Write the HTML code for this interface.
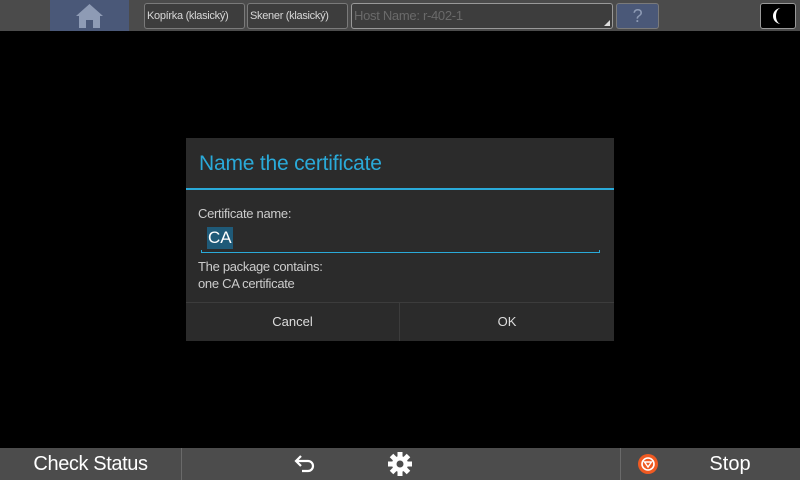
<!DOCTYPE html>
<html><head><meta charset="utf-8"><style>
*{margin:0;padding:0;box-sizing:border-box}
body{width:800px;height:480px;background:#000;position:relative;overflow:hidden;font-family:"Liberation Sans",sans-serif;}
.top{position:absolute;left:0;top:0;width:800px;height:31px;background:#4b4b4b}
.home{position:absolute;left:50px;top:0;width:79px;height:31px;background:#4a5878}
.tb{position:absolute;top:3px;height:26px;border:1px solid #7a7a7a;border-radius:3px;background:#3d3d3d;color:#d8d8d8;font-size:11px;line-height:24px;padding-left:2px;white-space:nowrap;overflow:hidden;letter-spacing:-0.3px}
.bot{position:absolute;left:0;top:448px;width:800px;height:32px;background:#4c4c4c;color:#fff}
.dlg{position:absolute;left:186px;top:138px;width:428px;height:203px;background:#2b2b2b}
</style></head><body>
<div class="top">
<div class="home"><svg width="79" height="31"><path d="M39.5 4 L26 16 L29 16 L29 28 L36 28 L36 20 L43 20 L43 28 L50 28 L50 16 L53 16 Z" fill="#8e9bb5"/><rect x="36" y="20" width="7" height="8" fill="#4a5878"/></svg></div>
<div class="tb" style="left:144px;width:101px">Kopírka (klasický)</div>
<div class="tb" style="left:247px;width:101px">Skener (klasický)</div>
<div class="tb" style="left:351px;width:262px;color:#6a6a6a;font-size:13px;border-color:#999">Host Name: r-402-1<svg style="position:absolute;right:2px;bottom:2px" width="6" height="6"><path d="M6 0 L6 6 L0 6Z" fill="#ddd"/></svg></div>
<div class="tb" style="left:616px;width:43px;background:#4a5878;color:#8e9bb5;font-size:18px;text-align:center;padding:0">?</div>
<div style="position:absolute;left:760px;top:3px;width:36px;height:26px;background:#000;border:1px solid #999;border-radius:3px"><svg width="34" height="24"><path d="M20 4 A8 8 0 0 0 20 20 A5 8 0 0 1 20 4Z" fill="#fff"/></svg></div>
</div>
<div class="dlg">
<div style="position:absolute;left:13px;top:14px;color:#2aaad9;font-size:21px;letter-spacing:-0.2px">Name the certificate</div>
<div style="position:absolute;left:0;top:50px;width:428px;height:2px;background:#2aaad9"></div>
<div style="position:absolute;left:12px;top:68px;color:#ccc;font-size:13px;letter-spacing:-0.3px">Certificate name:</div>
<div style="position:absolute;left:21px;top:89px;background:#1f5a78;color:#fff;font-size:17px;padding:0 1px;line-height:22px">CA</div>
<div style="position:absolute;left:15px;top:112px;width:399px;height:3px;border:1px solid #2aaad9;border-top:none"></div>
<div style="position:absolute;left:12px;top:120px;color:#ccc;font-size:13px;line-height:17px;letter-spacing:-0.3px">The package contains:<br>one CA certificate</div>
<div style="position:absolute;left:0;top:164px;width:428px;height:1px;background:#3c3c3c"></div>
<div style="position:absolute;left:213px;top:164px;width:1px;height:39px;background:#3c3c3c"></div>
<div style="position:absolute;left:0;top:176px;width:213px;text-align:center;color:#ddd;font-size:13px">Cancel</div>
<div style="position:absolute;left:214px;top:176px;width:214px;text-align:center;color:#ddd;font-size:13px">OK</div>
</div>
<div class="bot">
<div style="position:absolute;left:0;top:5px;width:181px;text-align:center;font-size:20px;letter-spacing:-0.4px">Check Status</div>
<div style="position:absolute;left:181px;top:0;width:1px;height:32px;background:#6a6a6a"></div>
<div style="position:absolute;left:620px;top:0;width:1px;height:32px;background:#6a6a6a"></div>
<svg style="position:absolute;left:293px;top:5px" width="26" height="22"><path d="M8 3 L3 8 L8 13 M3 8 H15 A5 5 0 0 1 15 18 H9" stroke="#fff" stroke-width="2.2" fill="none"/></svg>
<svg style="position:absolute;left:386px;top:3px" width="28" height="26"><g fill="#fff" transform="translate(14 13)"><circle r="8"/><g id="t"><rect x="-2.5" y="-12" width="5" height="24"/><rect x="-12" y="-2.5" width="24" height="5"/></g><use href="#t" transform="rotate(45)"/></g><circle cx="14" cy="13" r="3.5" fill="#4c4c4c"/></svg>
<svg style="position:absolute;left:637px;top:5px" width="22" height="22"><circle cx="11" cy="11" r="10" fill="#f05a22"/><circle cx="11" cy="11" r="6" fill="none" stroke="#fff" stroke-width="1.6"/><path d="M7.5 9 H14.5 L11 14Z" fill="none" stroke="#fff" stroke-width="1.4"/></svg>
<div style="position:absolute;left:680px;top:5px;width:100px;text-align:center;font-size:20px">Stop</div>
</div>
</body></html>
